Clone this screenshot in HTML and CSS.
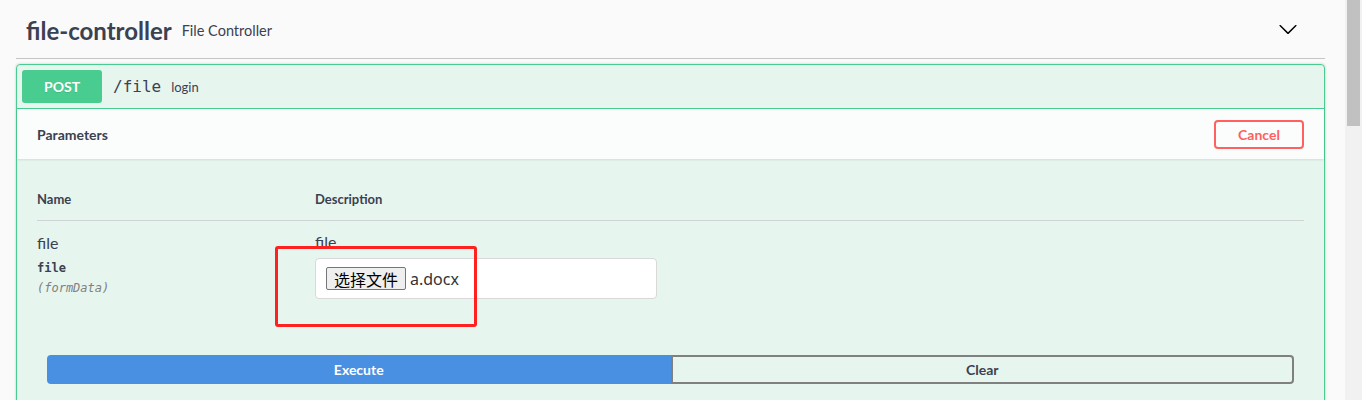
FILE: index.html
```html
<!DOCTYPE html>
<html lang="zh-CN">
<head>
<meta charset="utf-8">
<title>file-controller</title>
<link rel="stylesheet" href="styles.css">
</head>
<body>
<div class="page">
  <div class="tag">
    <h3 class="tag-name">file-controller</h3>
    <span class="tag-desc">File Controller</span>
    <svg class="chevron" width="20" height="20" viewBox="0 0 20 20"><path d="M17.418 6.109c.272-.268.709-.268.979 0s.271.701 0 .969l-7.908 7.83c-.27.268-.707.268-.979 0l-7.908-7.830c-.27-.268-.27-.701 0-.969.271-.268.709-.268.979 0L10 13.25l7.418-7.141z"/></svg>
  </div>
  <div class="opblock">
    <div class="summary">
      <span class="method">POST</span>
      <span class="path">/file</span>
      <span class="summary-desc">login</span>
    </div>
    <div class="section-header">
      <h4 class="section-title">Parameters</h4>
      <button class="btn-cancel">Cancel</button>
    </div>
    <div class="params">
      <table class="param-table">
        <thead>
          <tr><th class="col-name">Name</th><th>Description</th></tr>
        </thead>
        <tbody>
          <tr>
            <td class="col-name">
              <div class="param-name">file</div>
              <div class="param-type">file</div>
              <div class="param-in">(formData)</div>
            </td>
            <td>
              <div class="param-desc">file</div>
              <div class="file-input"><span class="file-btn">选择文件</span><span class="file-name">a.docx</span></div>
            </td>
          </tr>
        </tbody>
      </table>
    </div>
    <div class="btn-group">
      <button class="btn-execute">Execute</button>
      <button class="btn-clear">Clear</button>
    </div>
  </div>
  <div class="annotation"></div>
</div>
<div class="scrollbar"><div class="thumb"></div></div>
</body>
</html>
```

FILE: styles.css
```css
html, body {
  margin: 0;
  padding: 0;
}
body {
  background: #fafafa;
  display: flex;
  height: 400px;
  overflow: hidden;
  font-family: Lato, "Noto Sans", sans-serif;
  color: #3b4151;
}
.page {
  flex: 1;
  position: relative;
  padding: 0 20px 0 16px;
}
.tag {
  height: 59px;
  box-sizing: border-box;
  padding: 2px 27px 0 10px;
  display: flex;
  align-items: center;
  border-bottom: 1px solid #c3c5c9;
  margin-bottom: 5px;
}
.tag-name {
  margin: 0;
  font-size: 24px;
  font-weight: 700;
}
.tag-desc {
  margin-left: 10px;
  font-size: 14.5px;
  flex: 1;
}
.chevron {
  margin-top: -2px;
  fill: #000;
}
.opblock {
  border: 1px solid #49cc90;
  border-radius: 4px;
  background: rgba(73, 204, 144, 0.1);
  box-shadow: 0 0 3px rgba(0, 0, 0, 0.19);
}
.summary {
  padding: 5px;
  display: flex;
  align-items: center;
  border-bottom: 1px solid #49cc90;
}
.method {
  width: 80px;
  height: 33px;
  border-radius: 3px;
  background: #49cc90;
  color: #fff;
  font-size: 14px;
  font-weight: 700;
  display: flex;
  align-items: center;
  justify-content: center;
  text-shadow: 0 1px 0 rgba(0, 0, 0, 0.1);
}
.path {
  padding: 0 10px 0 11px;
  font-family: "DejaVu Sans Mono", monospace;
  font-size: 16px;
}
.summary-desc {
  font-size: 13px;
}
.section-header {
  height: 50px;
  box-sizing: border-box;
  padding: 0 20px;
  display: flex;
  align-items: center;
  justify-content: space-between;
  background: rgba(255, 255, 255, 0.8);
  box-shadow: 0 1px 2px rgba(0, 0, 0, 0.1);
}
.section-title {
  margin: 0;
  font-size: 14px;
  font-weight: 700;
}
.btn-cancel {
  width: 90px;
  height: 29px;
  border: 2px solid #ff6060;
  border-radius: 4px;
  background: transparent;
  color: #ff6060;
  font-family: Lato, "Noto Sans", sans-serif;
  font-size: 14px;
  font-weight: 700;
  padding: 0;
}
.params {
  padding: 20px 20px 16px;
}
.param-table {
  width: 100%;
  border-collapse: collapse;
}
.param-table th {
  text-align: left;
  font-size: 13px;
  font-weight: 700;
  padding: 12px 0 13px;
  line-height: 16px;
  border-bottom: 1px solid #cfd4d6;
}
.param-table td {
  padding: 10px 0;
  vertical-align: top;
}
.col-name {
  width: 278px;
}
.param-name {
  font-size: 16px;
  line-height: 24px;
}
.param-type {
  margin-top: 3px;
  font-family: "DejaVu Sans Mono", monospace;
  font-size: 12px;
  font-weight: 700;
  line-height: 20px;
}
.param-in {
  font-family: "DejaVu Sans Mono", monospace;
  font-size: 12px;
  font-style: italic;
  color: #808080;
  line-height: 20px;
}
.param-desc {
  font-size: 16px;
  line-height: 22px;
}
.file-input {
  margin-top: 5px;
  width: 342px;
  height: 41px;
  box-sizing: border-box;
  padding: 0 10px;
  display: flex;
  align-items: center;
  background: #fff;
  border: 1px solid #d9d9d9;
  border-radius: 4px;
}
.file-btn {
  height: 23px;
  box-sizing: border-box;
  padding: 0 7px;
  display: flex;
  align-items: center;
  background: #efefef;
  border: 1px solid #767676;
  border-radius: 2px;
  color: #000;
  font-family: "Noto Sans CJK SC", sans-serif;
  font-size: 16px;
}
.file-name {
  margin-left: 4px;
  font-family: "Noto Sans", sans-serif;
  font-size: 16px;
  color: #333;
}
.btn-group {
  display: flex;
  padding: 30px;
}
.btn-execute, .btn-clear {
  flex: 1;
  height: 29px;
  font-family: Lato, "Noto Sans", sans-serif;
  font-size: 14px;
  font-weight: 700;
  padding: 0;
}
.btn-execute {
  background: #4990e2;
  border: 2px solid #4990e2;
  color: #fff;
  border-radius: 4px 0 0 4px;
}
.btn-clear {
  background: transparent;
  border: 2px solid #808080;
  color: #3b4151;
  border-radius: 0 4px 4px 0;
}
.annotation {
  position: absolute;
  left: 275px;
  top: 246px;
  width: 202px;
  height: 81px;
  box-sizing: border-box;
  border: 3px solid #ff2020;
  border-radius: 3px;
}
.scrollbar {
  width: 17px;
  background: #f1f1f1;
  flex-shrink: 0;
}
.thumb {
  margin: 0 2px;
  height: 126px;
  background: #c1c1c1;
}
```
